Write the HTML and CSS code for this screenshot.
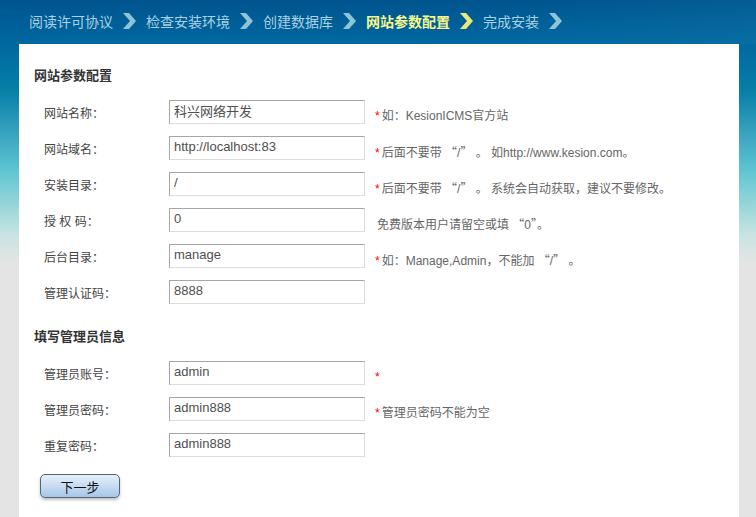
FILE: index.html
```html
<!DOCTYPE html>
<html lang="zh-CN">
<head>
    <meta charset="UTF-8">
    <title>KesionICMS 安装向导</title>
    <link rel="stylesheet" href="styles.css">
</head>
<body>
    <div class="header">
        <span class="step">阅读许可协议</span>
        <svg class="arrow" viewBox="0 0 13 16"><polygon points="0,0 6,0 13,8 6,16 0,16 7,8"/></svg>
        <span class="step">检查安装环境</span>
        <svg class="arrow" viewBox="0 0 13 16"><polygon points="0,0 6,0 13,8 6,16 0,16 7,8"/></svg>
        <span class="step">创建数据库</span>
        <svg class="arrow" viewBox="0 0 13 16"><polygon points="0,0 6,0 13,8 6,16 0,16 7,8"/></svg>
        <span class="step current">网站参数配置</span>
        <svg class="arrow current" viewBox="0 0 13 16"><polygon points="0,0 6,0 13,8 6,16 0,16 7,8"/></svg>
        <span class="step">完成安装</span>
        <svg class="arrow" viewBox="0 0 13 16"><polygon points="0,0 6,0 13,8 6,16 0,16 7,8"/></svg>
    </div>

    <div class="panel">
        <h3 class="section-title">网站参数配置</h3>
        <div class="form">
            <label>网站名称：</label>
            <input type="text" value="科兴网络开发">
            <span class="hint"><i>*</i>如：KesionICMS官方站</span>

            <label>网站域名：</label>
            <input type="text" value="http://localhost:83">
            <span class="hint"><i>*</i>后面不要带 <b>“</b>/<b>”</b> 。 如http://www.kesion.com。</span>

            <label>安装目录：</label>
            <input type="text" value="/">
            <span class="hint"><i>*</i>后面不要带 <b>“</b>/<b>”</b> 。 系统会自动获取，建议不要修改。</span>

            <label>授 权 码：</label>
            <input type="text" value="0">
            <span class="hint plain">免费版本用户请留空或填 <b>“</b>0<b>”</b>。</span>

            <label>后台目录：</label>
            <input type="text" value="manage">
            <span class="hint"><i>*</i>如：Manage,Admin，不能加 <b>“</b>/<b>”</b> 。</span>

            <label>管理认证码：</label>
            <input type="text" value="8888">
            <span class="hint"></span>
        </div>

        <h3 class="section-title second">填写管理员信息</h3>
        <div class="form">
            <label>管理员账号：</label>
            <input type="text" value="admin">
            <span class="hint"><i>*</i></span>

            <label>管理员密码：</label>
            <input type="text" value="admin888">
            <span class="hint"><i>*</i>管理员密码不能为空</span>

            <label>重复密码：</label>
            <input type="text" value="admin888">
            <span class="hint"></span>
        </div>

        <button class="next">下一步</button>
    </div>
</body>
</html>
```

FILE: styles.css
```css
* {
    margin: 0;
    padding: 0;
    box-sizing: border-box;
}

body {
    min-height: 100vh;
    font-family: "Liberation Sans", "Noto Sans CJK SC", sans-serif;
    background: linear-gradient(to bottom, #00548e 0, #0068a0 44px, #067ea6 90px, #3fa9c4 140px, #5ec4d1 170px, #97d6d9 205px, #c8e4e3 235px, #e4e4e4 262px, #e4e4e4 100%);
    overflow: hidden;
}

.header {
    height: 44px;
    display: flex;
    align-items: center;
    padding-left: 29px;
    padding-bottom: 3px;
    background: linear-gradient(160deg, rgba(0, 80, 140, 0) 60%, rgba(20, 120, 170, 0.35) 100%);
}

.step {
    font-size: 14px;
    color: #a9d1e3;
    font-family: "Noto Sans CJK SC", sans-serif;
}

.step.current {
    color: #f7f78c;
    font-weight: bold;
}

.arrow {
    width: 13px;
    height: 16px;
    margin: 1px 10px 0 10px;
    fill: #8fc4d6;
}

.arrow.current {
    fill: #eaea7a;
}

.panel {
    width: 720px;
    margin-left: 19px;
    min-height: calc(100vh - 44px);
    background: #fff;
    padding: 24px 15px 0 15px;
}

.section-title {
    font-size: 13px;
    font-weight: bold;
    color: #333;
    line-height: 16px;
    margin-bottom: 16px;
}

.section-title.second {
    margin-top: 25px;
    margin-bottom: 16px;
}

.form {
    display: grid;
    grid-template-columns: 125px 196px 1fr;
    row-gap: 12px;
    padding-left: 10px;
}

.form label {
    font-size: 12px;
    color: #444;
    align-self: center;
}

.form input {
    width: 196px;
    height: 24px;
    padding: 1px 0 5px 4px;
    border: 1px solid;
    border-color: #a6a6a6 #dcdcdc #dcdcdc #a6a6a6;
    font-family: "Liberation Sans", "Noto Sans CJK SC", sans-serif;
    font-size: 13px;
    line-height: 16px;
    color: #4f4f4f;
}

.hint {
    font-size: 12px;
    color: #666;
    padding: 9px 0 0 10px;
    line-height: 14px;
}

.hint.plain {
    padding-left: 12px;
}

.hint i {
    font-style: normal;
    color: #f00;
    margin-right: 2px;
}

.hint b {
    font-weight: normal;
    font-family: "Noto Sans CJK SC", sans-serif;
}

.next {
    display: block;
    margin: 17px 0 0 6px;
    width: 80px;
    height: 24px;
    border: 1px solid #5a6470;
    border-radius: 5px;
    background: linear-gradient(to bottom, #e6f0fa 0%, #c6dcf2 50%, #a6c6e8 100%);
    box-shadow: 0 2px 3px rgba(0, 0, 0, 0.25);
    font-family: "Noto Sans CJK SC", sans-serif;
    font-size: 13px;
    color: #111;
}
```
